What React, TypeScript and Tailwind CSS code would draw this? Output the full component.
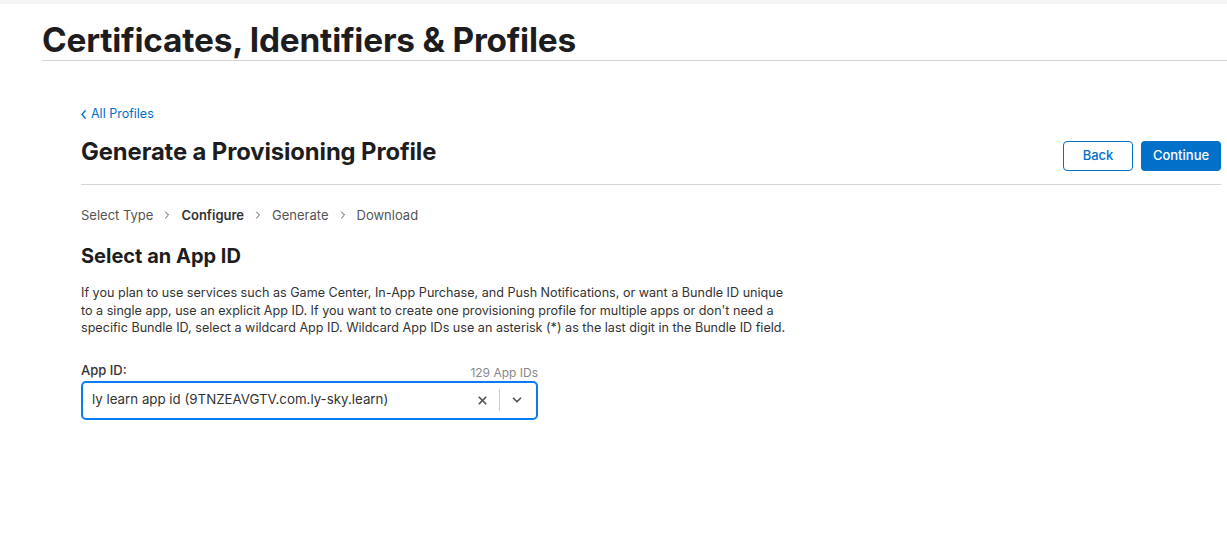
import { ChevronDown, ChevronRight, X } from 'lucide-react';

const steps = [
  { label: 'Select Type', active: false },
  { label: 'Configure', active: true },
  { label: 'Generate', active: false },
  { label: 'Download', active: false },
];

export default function App() {
  return (
    <div className="min-h-[540px] bg-white text-[#1d1d1f]" style={{ fontFamily: 'Inter, "Liberation Sans", sans-serif' }}>
      <div className="h-[4px] bg-[#f5f5f7]" />
      <header className="pl-[42px] pt-[17px]">
        <h1 className="text-[33.4px] font-bold leading-[38px] tracking-[-0.2px] text-[#1d1d1f]">
          Certificates, Identifiers &amp; Profiles
        </h1>
        <div className="mt-[1px] border-b border-[#d6d6d6]" />
      </header>

      <main className="pl-[81px] pr-[6px] pt-[44px]">
        <a className="flex items-center gap-[5px] text-[12.5px] leading-[18px] text-[#0070c9]">
          <svg width="5" height="9" viewBox="0 0 5 9" fill="none">
            <path d="M4.2 0.8 L1 4.5 L4.2 8.2" stroke="#0070c9" strokeWidth="1.3" strokeLinecap="round" strokeLinejoin="round" />
          </svg>
          All Profiles
        </a>

        <div className="mt-[15px] flex items-start justify-between">
          <h2 className="text-[23.8px] font-bold leading-[28px] tracking-[-0.1px]">Generate a Provisioning Profile</h2>
          <div className="mt-[3px] flex gap-[8px]">
            <button className="h-[30px] w-[70px] rounded-[4px] border border-[#0070c9] text-[13px] font-medium text-[#0070c9]">
              Back
            </button>
            <button className="h-[30px] w-[80px] rounded-[4px] bg-[#0070c9] text-[13px] font-medium text-white">
              Continue
            </button>
          </div>
        </div>

        <div className="mt-[13px] border-b border-[#d6d6d6]" />

        <nav className="mt-[21px] flex items-center text-[13px] leading-[18px] text-[#555]">
          {steps.map((s, i) => (
            <span key={s.label} className="flex items-center">
              {i > 0 && <ChevronRight className="mx-[8px] w-3 h-3 text-[#555]" strokeWidth={2} />}
              <span className={s.active ? 'font-semibold text-[#333]' : ''}>{s.label}</span>
            </span>
          ))}
        </nav>

        <h3 className="mt-[20px] text-[20px] font-bold leading-[24px]">Select an App ID</h3>

        <p className="mt-[16px] w-[712px] text-[12.6px] leading-[17.5px] text-[#333]">
          If you plan to use services such as Game Center, In-App Purchase, and Push Notifications, or want a Bundle ID unique to a single app, use an explicit App ID. If you want to create one provisioning profile for multiple apps or don't need a specific Bundle ID, select a wildcard App ID. Wildcard App IDs use an asterisk (*) as the last digit in the Bundle ID field.
        </p>

        <div className="mt-[25px] w-[457px]">
          <div className="flex items-end justify-between">
            <span className="text-[13px] font-medium leading-[16px] text-[#333]">App ID:</span>
            <span className="text-[12px] leading-[14px] text-[#888] translate-y-[2px]">129 App IDs</span>
          </div>
          <div className="mt-[3px] flex h-[39px] items-center rounded-[5px] border-2 border-[#0a7cf2] pl-[9px] pr-[12px]">
            <span className="flex-1 text-[13.3px] text-[#333]">ly learn app id (9TNZEAVGTV.com.ly-sky.learn)</span>
            <X className="w-[13px] h-[13px] text-[#555]" strokeWidth={3.2} />
            <span className="mx-[10px] h-[22px] w-px bg-[#ccc]" />
            <ChevronDown className="w-[14px] h-[14px] text-[#555]" strokeWidth={3} />
          </div>
        </div>
      </main>
    </div>
  );
}
